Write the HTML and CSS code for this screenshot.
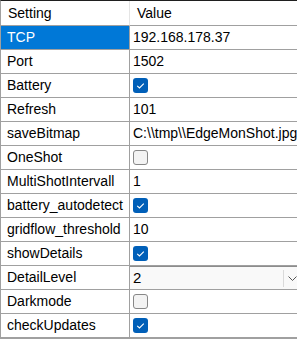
FILE: index.html
```html
<!DOCTYPE html>
<html lang="en">
<head>
  <meta charset="UTF-8" />
  <meta name="viewport" content="width=device-width, initial-scale=1.0" />
  <title>Settings</title>
  <link rel="stylesheet" href="styles.css">
</head>
<body>
  <div class="grid">
    <div class="cell head key">Setting</div>
    <div class="cell head val">Value</div>

    <div class="cell key selected">TCP</div>
    <div class="cell val">192.168.178.37</div>

    <div class="cell key">Port</div>
    <div class="cell val">1502</div>

    <div class="cell key">Battery</div>
    <div class="cell val"><span class="check on"><svg viewBox="0 0 15 15"><path d="M4.2 7.8 L6.5 10 L10.8 5.6" /></svg></span></div>

    <div class="cell key">Refresh</div>
    <div class="cell val">101</div>

    <div class="cell key">saveBitmap</div>
    <div class="cell val">C:\\tmp\\EdgeMonShot.jpg</div>

    <div class="cell key">OneShot</div>
    <div class="cell val"><span class="check"></span></div>

    <div class="cell key">MultiShotIntervall</div>
    <div class="cell val">1</div>

    <div class="cell key">battery_autodetect</div>
    <div class="cell val"><span class="check on"><svg viewBox="0 0 15 15"><path d="M4.2 7.8 L6.5 10 L10.8 5.6" /></svg></span></div>

    <div class="cell key">gridflow_threshold</div>
    <div class="cell val">10</div>

    <div class="cell key">showDetails</div>
    <div class="cell val"><span class="check on"><svg viewBox="0 0 15 15"><path d="M4.2 7.8 L6.5 10 L10.8 5.6" /></svg></span></div>

    <div class="cell key">DetailLevel</div>
    <div class="cell val combo-cell">
      <div class="combo">
        <span class="combo-text">2</span>
        <span class="combo-btn"><svg viewBox="0 0 9 5"><polyline points="0.5,0.5 4.5,4.5 8.5,0.5" /></svg></span>
      </div>
    </div>

    <div class="cell key">Darkmode</div>
    <div class="cell val"><span class="check"></span></div>

    <div class="cell key last">checkUpdates</div>
    <div class="cell val last"><span class="check on"><svg viewBox="0 0 15 15"><path d="M4.2 7.8 L6.5 10 L10.8 5.6" /></svg></span></div>
  </div>
</body>
</html>
```

FILE: styles.css
```css
* {
  box-sizing: border-box;
}

body {
  margin: 0;
  font-family: 'Liberation Sans', Arial, sans-serif;
  font-size: 14px;
  color: #000;
  background: #fff;
  overflow: hidden;
}

.grid {
  display: grid;
  grid-template-columns: 129px 171px;
  width: 300px;
  border-top: 1px solid #1f1f1f;
  border-left: 1px solid #a0a0a0;
}

.cell {
  height: 24px;
  line-height: 23px;
  border-bottom: 1px solid #a0a0a0;
  white-space: nowrap;
  overflow: hidden;
}

.key {
  padding-left: 6px;
  border-right: 1px solid #a0a0a0;
}

.val {
  padding-left: 3px;
  display: flex;
  align-items: center;
}

.head {
  height: 25px;
  line-height: 23px;
  padding-top: 1px;
  background: #fff;
}

.head.key {
  padding-left: 7px;
  border-right-color: #e5e5e5;
}

.head.val {
  padding-left: 7px;
  align-items: flex-start;
}

.selected {
  background-color: #0078d7;
  color: #fff;
}

.last {
  height: 25px;
  border-bottom: 2px solid #a0a0a0;
}

.check {
  display: inline-block;
  width: 15px;
  height: 15px;
  border-radius: 3px;
  border: 1px solid #878787;
  background: #f3f3f3;
}

.check.on {
  border: none;
  background: #005fb8;
}

.check svg {
  display: block;
  width: 15px;
  height: 15px;
}

.check path {
  fill: none;
  stroke: #fff;
  stroke-width: 1.1;
}

.combo-cell {
  padding-left: 0;
}

.combo {
  display: flex;
  width: 100%;
  height: 100%;
  background: #f9f9f9;
  border-top: 1px solid #8c8c8c;
}

.combo-text {
  flex: 1;
  padding-left: 3px;
  line-height: 22px;
  font-size: 15px;
}

.combo-btn {
  width: 18px;
  display: flex;
  align-items: center;
  justify-content: center;
  border-left: 1px solid #dadada;
  margin: 3px 0 2px;
}

.combo-btn svg {
  width: 9px;
  height: 5px;
}

.combo-btn polyline {
  fill: none;
  stroke: #555;
  stroke-width: 1;
}
```
